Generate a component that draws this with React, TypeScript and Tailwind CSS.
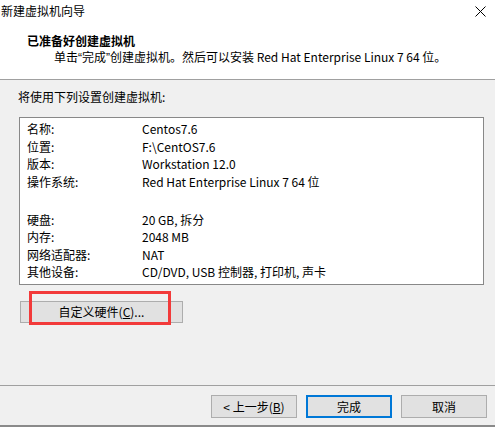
import React from 'react';

const rows1 = [
  ['名称:', 'Centos7.6'],
  ['位置:', 'F:\\CentOS7.6'],
  ['版本:', 'Workstation 12.0'],
  ['操作系统:', 'Red Hat Enterprise Linux 7 64 位'],
];

const rows2 = [
  ['硬盘:', '20 GB, 拆分'],
  ['内存:', '2048 MB'],
  ['网络适配器:', 'NAT'],
  ['其他设备:', 'CD/DVD, USB 控制器, 打印机, 声卡'],
];

const Row = ({ label, value }: { label: string; value: string }) => (
  <div className="flex leading-[17.5px] whitespace-nowrap">
    <span className="w-[115px]">{label}</span>
    <span>{value}</span>
  </div>
);

const Q = ({ c }: { c: string }) => (
  <span style={{ fontFamily: '"Liberation Sans", sans-serif' }}>{c}</span>
);

export default function App() {
  return (
    <div
      className="w-[495px] h-[427px] bg-[#f0f0f0] flex flex-col text-[12px] text-black overflow-hidden"
      style={{ fontFamily: '"Noto Sans CJK SC", "Noto Sans", sans-serif' }}
    >
      {/* title + header */}
      <div className="h-[80px] bg-white border-b border-[#a0a0a0] flex flex-col shrink-0">
        <div className="h-[22px] flex items-center justify-between pl-[1px] pr-[9px]">
          <span>新建虚拟机向导</span>
          <svg width="11" height="11" viewBox="0 0 11 11">
            <path d="M0.5 0.5 L10.5 10.5 M10.5 0.5 L0.5 10.5" stroke="#000" strokeWidth="1" fill="none" />
          </svg>
        </div>
        <div className="pl-[27px] mt-[11px] font-bold leading-[16px]">已准备好创建虚拟机</div>
        <div className="pl-[54px] leading-[16px] whitespace-nowrap">
          单击<Q c="“" />完成<Q c="”" />创建虚拟机。然后可以安装 Red Hat Enterprise Linux 7 64 位。
        </div>
      </div>

      {/* body */}
      <div className="pl-[18px] pt-[9px] leading-[16px]">将使用下列设置创建虚拟机:</div>
      <div className="ml-[19px] mt-[12px] w-[465px] h-[168px] bg-white border border-[#888] pl-[7px] pt-[2px]">
        {rows1.map(([l, v]) => (
          <Row key={l} label={l} value={v} />
        ))}
        <div className="h-[20.5px]" />
        {rows2.map(([l, v]) => (
          <Row key={l} label={l} value={v} />
        ))}
      </div>

      <div className="relative ml-[20px] mt-[16px] w-[163px]">
        <button className="w-[163px] h-[22px] bg-[#e1e1e1] border border-[#adadad] flex items-center justify-center">
          自定义硬件(<span className="underline">C</span>)...
        </button>
        <div className="absolute left-[9px] top-[-10px] w-[142px] h-[34px] border-[3px] border-[#f23a3a]" />
      </div>

      {/* footer */}
      <div className="mt-auto h-[42px] border-t border-[#a0a0a0] border-b-2 border-b-[#8a8a8a] flex justify-end gap-[9px] pt-[9px] pr-[8px] shrink-0">
        <button className="w-[86px] h-[23px] bg-[#e1e1e1] border border-[#adadad] flex items-center justify-center">
          &lt; 上一步(<span className="underline">B</span>)
        </button>
        <button className="w-[86px] h-[23px] bg-[#e1e1e1] border-2 border-[#0078d7] flex items-center justify-center">
          完成
        </button>
        <button className="w-[86px] h-[23px] bg-[#e1e1e1] border border-[#adadad] flex items-center justify-center">
          取消
        </button>
      </div>
    </div>
  );
}
